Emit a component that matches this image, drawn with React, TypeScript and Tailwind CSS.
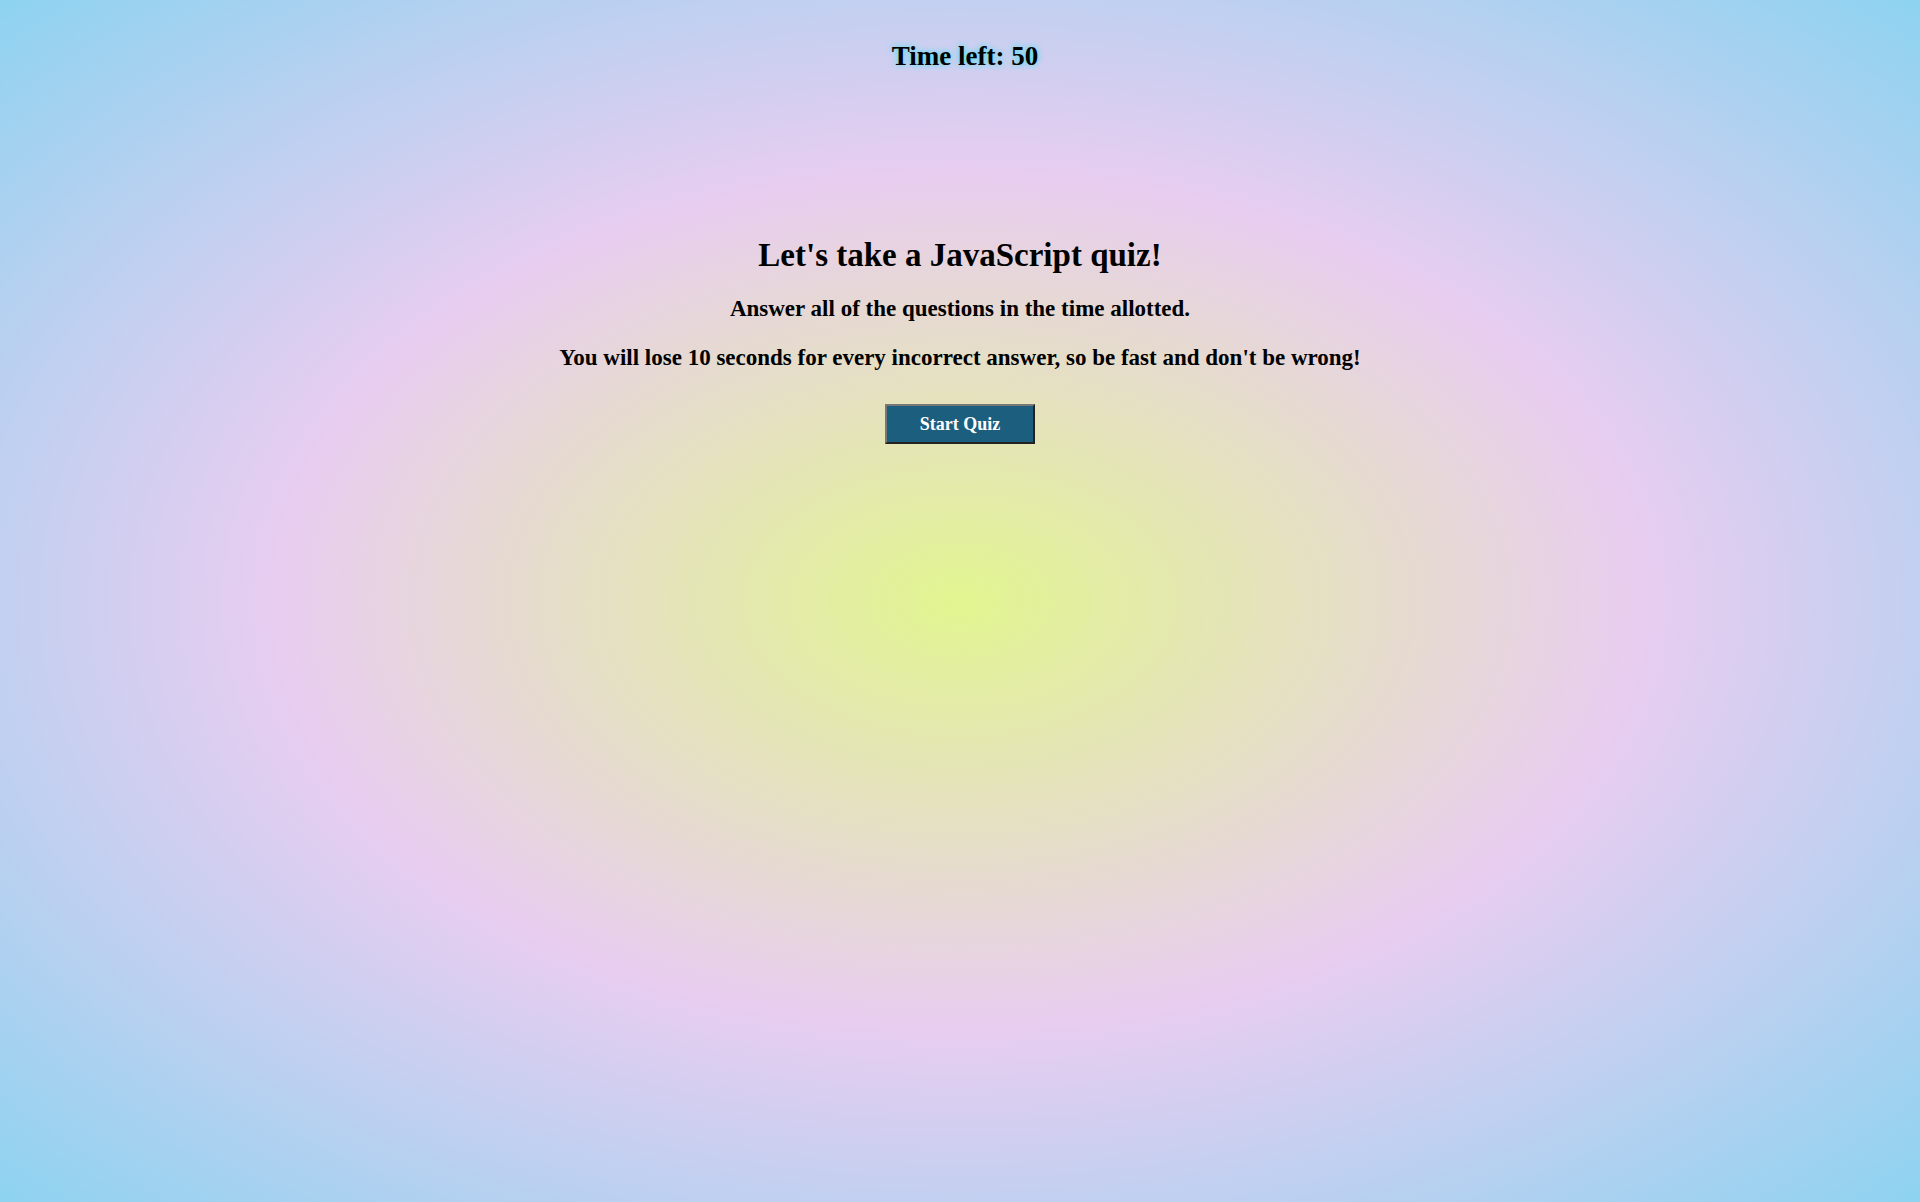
const Quiz = () => {
    return (
        <div className="min-h-screen w-full bg-[radial-gradient(ellipse_at_center,#e2f590_0%,#e8cdf0_50%,#8dd3f0_100%)] font-['Liberation_Serif',serif] text-black">
            <header className="flex justify-center pt-[38px] pl-[10px]">
                <h2 className="text-[27px] font-bold leading-[36px] [text-shadow:0_0_6px_#2de0f0]">
                    Time left: 50
                </h2>
            </header>

            <main className="flex flex-col items-center pt-[159px] text-center">
                <h1 className="text-[33px] font-bold leading-[44px]">Let's take a JavaScript quiz!</h1>
                <p className="mt-[18px] text-[23px] font-bold leading-[28px]">
                    Answer all of the questions in the time allotted.
                </p>
                <p className="mt-[21px] text-[23px] font-bold leading-[28px]">
                    You will lose 10 seconds for every incorrect answer, so be fast and don't be wrong!
                </p>
                <button className="mt-[32px] h-[40px] w-[150px] border-2 border-t-[#777] border-l-[#777] border-r-[#222] border-b-[#222] bg-[#1b5e7e] text-[18px] font-bold text-white">
                    Start Quiz
                </button>
            </main>
        </div>
    );
};

export default function App() {
    return <Quiz />;
}
